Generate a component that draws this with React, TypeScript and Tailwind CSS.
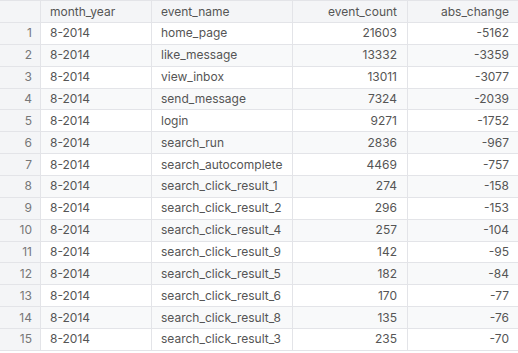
import React from "react";

const rows: [string, string, number, number][] = [
  ["8-2014", "home_page", 21603, -5162],
  ["8-2014", "like_message", 13332, -3359],
  ["8-2014", "view_inbox", 13011, -3077],
  ["8-2014", "send_message", 7324, -2039],
  ["8-2014", "login", 9271, -1752],
  ["8-2014", "search_run", 2836, -967],
  ["8-2014", "search_autocomplete", 4469, -757],
  ["8-2014", "search_click_result_1", 274, -158],
  ["8-2014", "search_click_result_2", 296, -153],
  ["8-2014", "search_click_result_4", 257, -104],
  ["8-2014", "search_click_result_9", 142, -95],
  ["8-2014", "search_click_result_5", 182, -84],
  ["8-2014", "search_click_result_6", 170, -77],
  ["8-2014", "search_click_result_8", 135, -76],
  ["8-2014", "search_click_result_3", 235, -70],
];

export default function App() {
  return (
    <div
      className="w-[518px] h-[353px] bg-white overflow-hidden text-[12px] text-[#555]"
      style={{ fontFamily: "Inter, 'Noto Sans', sans-serif" }}
    >
      <div className="border-t border-[#e3e4e8]">
        <div className="grid grid-cols-[41px_111px_141px_115px_110px] h-[22px] bg-[#f4f5f7] border-b border-[#e3e4e8]">
          <div className="border-r border-[#e3e4e8]" />
          <div className="flex items-center pl-[9px] border-r border-[#e3e4e8]">month_year</div>
          <div className="flex items-center pl-[9px] border-r border-[#e3e4e8]">event_name</div>
          <div className="flex items-center justify-end pr-[10px] border-r border-[#e3e4e8]">event_count</div>
          <div className="flex items-center justify-end pr-[9px]">abs_change</div>
        </div>
        {rows.map((r, i) => (
          <div
            key={i}
            className={
              "grid grid-cols-[41px_111px_141px_115px_110px] h-[21.87px] border-b border-[#e3e4e8] " +
              (i % 2 === 1 ? "bg-[#f8f9fa]" : "bg-white")
            }
          >
            <div className="flex items-center justify-end pr-[8px] bg-[#f4f5f7] border-r border-[#e3e4e8] text-[#777]">
              {i + 1}
            </div>
            <div className="flex items-center pl-[9px] border-r border-[#e3e4e8]">{r[0]}</div>
            <div className="flex items-center pl-[9px] border-r border-[#e3e4e8]">{r[1]}</div>
            <div className="flex items-center justify-end pr-[10px] border-r border-[#e3e4e8]">{r[2]}</div>
            <div className="flex items-center justify-end pr-[9px]">{r[3]}</div>
          </div>
        ))}
      </div>
    </div>
  );
}
